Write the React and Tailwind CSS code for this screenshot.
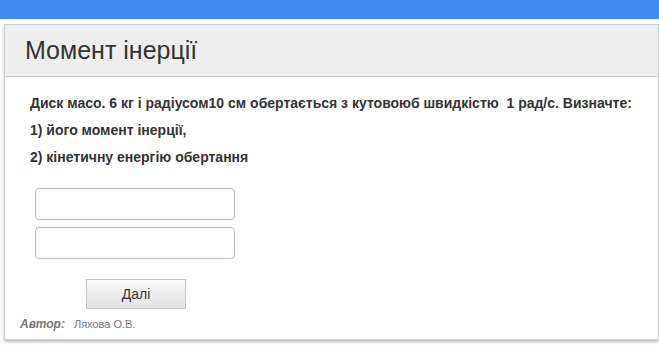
import React from 'react';

const App = () => {
    return (
        <div className="min-h-[345px] bg-white font-['Liberation_Sans',Arial,sans-serif]">
            <div className="h-[19px] bg-[#3f8cee]"></div>
            <div className="pl-[4px] pt-[5px]">
                <div className="bg-white border border-[#c8d4cf] shadow-[0_2px_3px_rgba(0,0,0,0.25)] h-[316px]">
                    <div className="h-[52px] bg-[#eeeeee] border-b border-[#cccccc] pl-[20px] pt-[11px]">
                        <h1 className="text-[25px] leading-[28px] text-[#333333]">Момент інерції</h1>
                    </div>
                    <div className="pl-[25px] pt-[13px] text-[14px] font-bold text-[#333333] leading-[27px]">
                        <p>Диск масо. 6 кг і радіусом10 см обертається з кутовоюб швидкістю&nbsp; 1 рад/с. Визначте:</p>
                        <p>1) його момент інерції,</p>
                        <p>2) кінетичну енергію обертання</p>
                    </div>
                    <div className="pl-[30px] pt-[17px] flex flex-col gap-[7px]">
                        <input className="w-[200px] h-[32px] border border-[#bbbbbb] rounded-[4px] bg-white outline-none px-2" />
                        <input className="w-[200px] h-[32px] border border-[#bbbbbb] rounded-[4px] bg-white outline-none px-2" />
                    </div>
                    <div className="pl-[81px] pt-[20px]">
                        <button className="w-[100px] h-[30px] border border-[#c4c4c4] bg-gradient-to-b from-[#fafafa] to-[#e2e2e2] text-[14px] text-[#333333]">Далі</button>
                    </div>
                    <div className="pl-[15px] pt-[6px] flex items-baseline gap-[9px] text-[#777777]">
                        <span className="text-[12px] font-bold italic">Автор:</span>
                        <span className="text-[11px]">Ляхова О.В.</span>
                    </div>
                </div>
            </div>
        </div>
    );
};

export default App;
